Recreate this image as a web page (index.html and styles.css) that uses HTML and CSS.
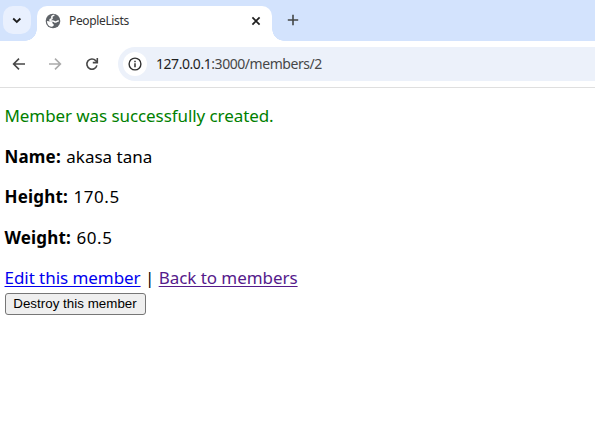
FILE: index.html
```html
<!DOCTYPE html>
<html lang="en">
<head>
<meta charset="utf-8">
<title>PeopleLists</title>
<link rel="stylesheet" href="styles.css">
</head>
<body>
<header class="browser">
  <div class="tabstrip">
    <div class="tab-search"><svg width="28" height="28" viewBox="0 0 28 28"><path d="M10.2 12.5l3.6 3.5 3.6-3.5" fill="none" stroke="#1f1f1f" stroke-width="1.8"/></svg></div>
    <div class="tab">
      <svg class="globe" width="16" height="16" viewBox="0 0 16 16"><circle cx="8" cy="8" r="7.3" fill="#5f6368"/><path d="M9.4 2.2C7.2 2.5 6.2 3.6 7 4.7c.4.8-.4 1.5-1.4 1.6-.8.2-.7 1.5 0 1.6 1.6.1 2.9-.3 3.7.6.6.8 1.9.8 2.5.1.5-.6 1.2-.6 2-.5" fill="none" stroke="#fff" stroke-width="1.5"/><path d="M1.9 7.9l3.5.5c1.5.1 2.2.8 2.2 1.8 0 .8 1.2.7 1.2 1.6 0 1-1 2.2-2.4 2C3.7 13.2 2 11 1.9 7.9z" fill="#fff"/></svg>
      <span class="tab-title">PeopleLists</span>
      <svg class="close" width="10" height="10" viewBox="0 0 10 10"><path d="M1.4 1.4l7.2 7.2M8.6 1.4L1.4 8.6" stroke="#1f1f1f" stroke-width="1.7"/></svg>
    </div>
    <svg class="new-tab" width="12" height="12" viewBox="0 0 12 12"><path d="M6 .8v10.4M.8 6h10.4" stroke="#444746" stroke-width="1.6"/></svg>
  </div>
  <nav class="toolbar">
    <svg width="14" height="14" viewBox="0 0 14 14"><path d="M13 7H2M7 1.6L1.6 7 7 12.4" fill="none" stroke="#474747" stroke-width="1.6"/></svg>
    <svg width="14" height="14" viewBox="0 0 14 14"><path d="M1 7h11M7 1.6L12.4 7 7 12.4" fill="none" stroke="#ababab" stroke-width="1.6"/></svg>
    <svg class="reload" width="14" height="14" viewBox="0 0 14 14"><path d="M11.9 8.4A5.1 5.1 0 1 1 10.7 3.6L12 5" fill="none" stroke="#474747" stroke-width="1.6"/><path d="M12.3 1v4.6H7.8" fill="none" stroke="#474747" stroke-width="1.6"/></svg>
    <div class="omnibox">
      <span class="site-info"><svg width="14" height="14" viewBox="0 0 14 14"><circle cx="7" cy="7" r="5.9" fill="none" stroke="#303030" stroke-width="1.4"/><path d="M7 6.2v4M7 3.7v1.5" stroke="#303030" stroke-width="1.5"/></svg></span>
      <span class="url"><b>127.0.0.1</b>:3000/members/2</span>
    </div>
  </nav>
</header>
<main>
  <p class="notice"><span>Member was successfully created.</span></p>
  <p><strong>Name:</strong> akasa tana</p>
  <p><strong>Height:</strong> <span class="number">170.5</span></p>
  <p><strong>Weight:</strong> <span class="number">60.5</span></p>
  <div class="links"><a class="edit" href="#">Edit this member</a> | <a class="back" href="#">Back to members</a></div>
  <button type="button">Destroy this member</button>
</main>
</body>
</html>
```
FILE: styles.css
```css
* { box-sizing: border-box; }
body { margin: 0; height: 446px; overflow: hidden; background: #fff; }
svg { display: block; flex: none; }
.tabstrip { display: flex; height: 41px; padding: 6px 0 0 3px; background: #d3e3fd; }
.tab-search { width: 28px; height: 28px; border-radius: 10px; background: #e9f0fe; }
.tab { position: relative; display: flex; align-items: center; width: 235px; height: 35px; margin-left: 6px; padding: 0 11px 6px 8px; border-radius: 10px 10px 0 0; background: #fff; }
.tab::before, .tab::after { content: ""; position: absolute; bottom: 0; width: 12px; height: 12px; }
.tab::before { left: -12px; background: radial-gradient(circle at 0 0, transparent 11.5px, #fff 12px); }
.tab::after { right: -12px; background: radial-gradient(circle at 100% 0, transparent 11.5px, #fff 12px); }
.tab-title { margin: 1px 0 0 8px; font: 12px/16px "Noto Sans", sans-serif; letter-spacing: -0.35px; color: #333; }
.close { margin-left: auto; }
.new-tab { margin: 8px 0 0 15px; }
.toolbar { display: flex; align-items: center; gap: 22px; height: 47px; padding-left: 12px; border-bottom: 1px solid #dfdfdf; }
.reload { margin: 0 -1px 0 1px; }
.omnibox { display: flex; align-items: center; flex: 1; height: 34px; margin-left: -2px; padding-left: 5px; border-radius: 17px 0 0 17px; background: #ecf1fa; }
.site-info { display: grid; place-items: center; width: 24px; height: 24px; border-radius: 50%; background: #fff; }
.url { margin: 0 0 0 9px; font: 14px/20px "Noto Sans", sans-serif; letter-spacing: -0.45px; color: #474747; }
.url b { font-weight: 400; color: #1f1f1f; }
main { padding: 15px 4.5px; font: 17px/25px "Noto Sans", sans-serif; color: #000; }
p { margin: 0 0 15.6px; }
.notice { color: green; letter-spacing: -0.08px; }
strong { margin-right: 1px; letter-spacing: 0.18px; }
.number { letter-spacing: 0.6px; }
.links { letter-spacing: -0.05px; }
.edit { color: #0000ee; }
.back { color: #551a8b; }
a { text-underline-offset: 2px; text-decoration-thickness: 1px; }
button { display: block; width: 141px; height: 22px; margin: 3px 0 0; padding: 0; border: 1px solid #767676; border-radius: 3px; background: #efefef; color: #000; font: 13.33px/18px "Liberation Sans", sans-serif; letter-spacing: 0.03px; }
```
